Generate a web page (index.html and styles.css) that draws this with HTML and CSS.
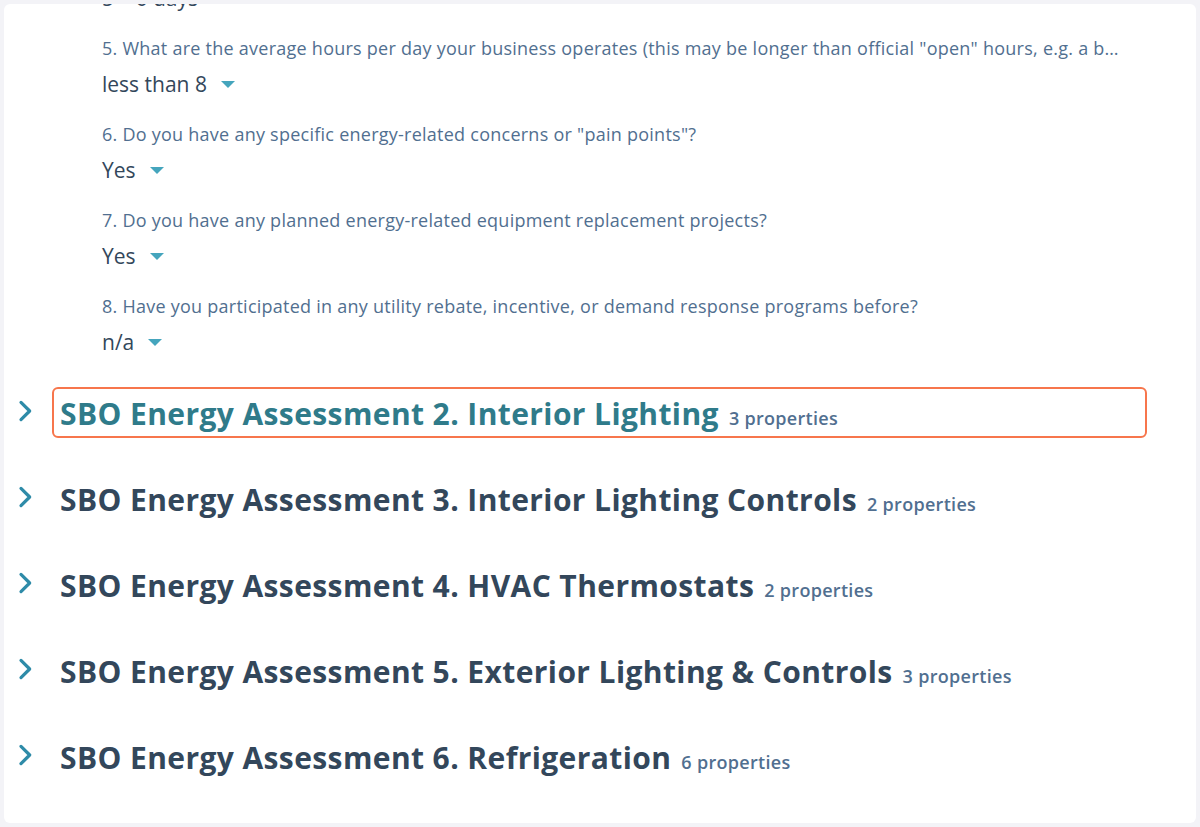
FILE: index.html
```html
<!DOCTYPE html>
<html lang="en">

<head>
    <meta charset="UTF-8">
    <meta name="viewport" content="width=device-width, initial-scale=1.0">
    <title>SBO Energy Assessment</title>
    <link rel="stylesheet" href="styles.css">
</head>

<body>
    <main class="card">
        <section class="props">
            <div class="field field-cut">
                <div class="value">5 – 6 days <span class="caret"></span></div>
            </div>
            <div class="field">
                <div class="label">5. What are the average hours per day your business operates (this may be longer than official "open" hours, e.g. a bakery that starts baking before opening)?</div>
                <div class="value">less than 8 <span class="caret"></span></div>
            </div>
            <div class="field">
                <div class="label">6. Do you have any specific energy-related concerns or "pain points"?</div>
                <div class="value">Yes <span class="caret"></span></div>
            </div>
            <div class="field">
                <div class="label">7. Do you have any planned energy-related equipment replacement projects?</div>
                <div class="value">Yes <span class="caret"></span></div>
            </div>
            <div class="field">
                <div class="label">8. Have you participated in any utility rebate, incentive, or demand response programs before?</div>
                <div class="value">n/a <span class="caret"></span></div>
            </div>
        </section>

        <section class="groups">
            <div class="group">
                <svg class="chevron" viewBox="0 0 12 18"><path d="M3 2.5 L9.5 9 L3 15.5" /></svg>
                <div class="group-title active">
                    <h2>SBO Energy Assessment 2. Interior Lighting</h2>
                    <span class="count">3 properties</span>
                </div>
            </div>
            <div class="group">
                <svg class="chevron" viewBox="0 0 12 18"><path d="M3 2.5 L9.5 9 L3 15.5" /></svg>
                <div class="group-title">
                    <h2>SBO Energy Assessment 3. Interior Lighting Controls</h2>
                    <span class="count">2 properties</span>
                </div>
            </div>
            <div class="group">
                <svg class="chevron" viewBox="0 0 12 18"><path d="M3 2.5 L9.5 9 L3 15.5" /></svg>
                <div class="group-title">
                    <h2>SBO Energy Assessment 4. HVAC Thermostats</h2>
                    <span class="count">2 properties</span>
                </div>
            </div>
            <div class="group">
                <svg class="chevron" viewBox="0 0 12 18"><path d="M3 2.5 L9.5 9 L3 15.5" /></svg>
                <div class="group-title">
                    <h2>SBO Energy Assessment 5. Exterior Lighting &amp; Controls</h2>
                    <span class="count">3 properties</span>
                </div>
            </div>
            <div class="group">
                <svg class="chevron" viewBox="0 0 12 18"><path d="M3 2.5 L9.5 9 L3 15.5" /></svg>
                <div class="group-title">
                    <h2>SBO Energy Assessment 6. Refrigeration</h2>
                    <span class="count">6 properties</span>
                </div>
            </div>
        </section>
    </main>
</body>

</html>
```

FILE: styles.css
```css
html {
    box-sizing: border-box;
    font-family: "Open Sans", "Noto Sans", sans-serif;
    font-size: 16px;
}

*,
*:before,
*:after {
    box-sizing: inherit;
}

body {
    margin: 0;
    height: 100vh;
    padding: 4px;
    background-color: #f3f3f7;
    overflow: hidden;
}

.card {
    height: 819px;
    background-color: #fff;
    border-radius: 6px;
    overflow: hidden;
}

.props {
    margin-top: -22px;
    padding-left: 98px;
    padding-right: 74px;
}

.field {
    margin-bottom: 22px;
}

.label {
    line-height: 24px;
    font-size: 18px;
    letter-spacing: 0.25px;
    color: #516f90;
    white-space: nowrap;
    overflow: hidden;
    text-overflow: ellipsis;
}

.value {
    display: flex;
    align-items: center;
    margin-top: 8px;
    line-height: 32px;
    font-size: 21px;
    color: #33475b;
}

.field-cut .value {
    margin-top: 0;
}

.caret {
    width: 0;
    height: 0;
    margin-left: 14px;
    border-left: 7px solid transparent;
    border-right: 7px solid transparent;
    border-top: 7px solid #45a5bd;
}

.groups {
    margin-top: 29px;
    padding-left: 13px;
    padding-right: 49px;
}

.group {
    display: flex;
    align-items: center;
    margin-bottom: 35px;
}

.chevron {
    width: 16px;
    height: 24px;
    margin-top: -3px;
    fill: none;
    stroke: #2e8ba8;
    stroke-width: 2.4;
    stroke-linecap: round;
    stroke-linejoin: round;
}

.group-title {
    flex-grow: 1;
    display: flex;
    align-items: baseline;
    height: 51px;
    margin-left: 19px;
    padding: 3px 6px 0;
    border: 2px solid transparent;
    border-radius: 6px;
    color: #33475b;
}

.group-title.active {
    border-color: #f7764c;
    color: #2f7b8a;
}

.group-title h2 {
    margin: 0;
    line-height: 44px;
    font-size: 30px;
    font-weight: 700;
    letter-spacing: 0.4px;
}

.count {
    margin-left: 10px;
    font-size: 18px;
    font-weight: 600;
    letter-spacing: 0.3px;
    color: #516f90;
}
```
